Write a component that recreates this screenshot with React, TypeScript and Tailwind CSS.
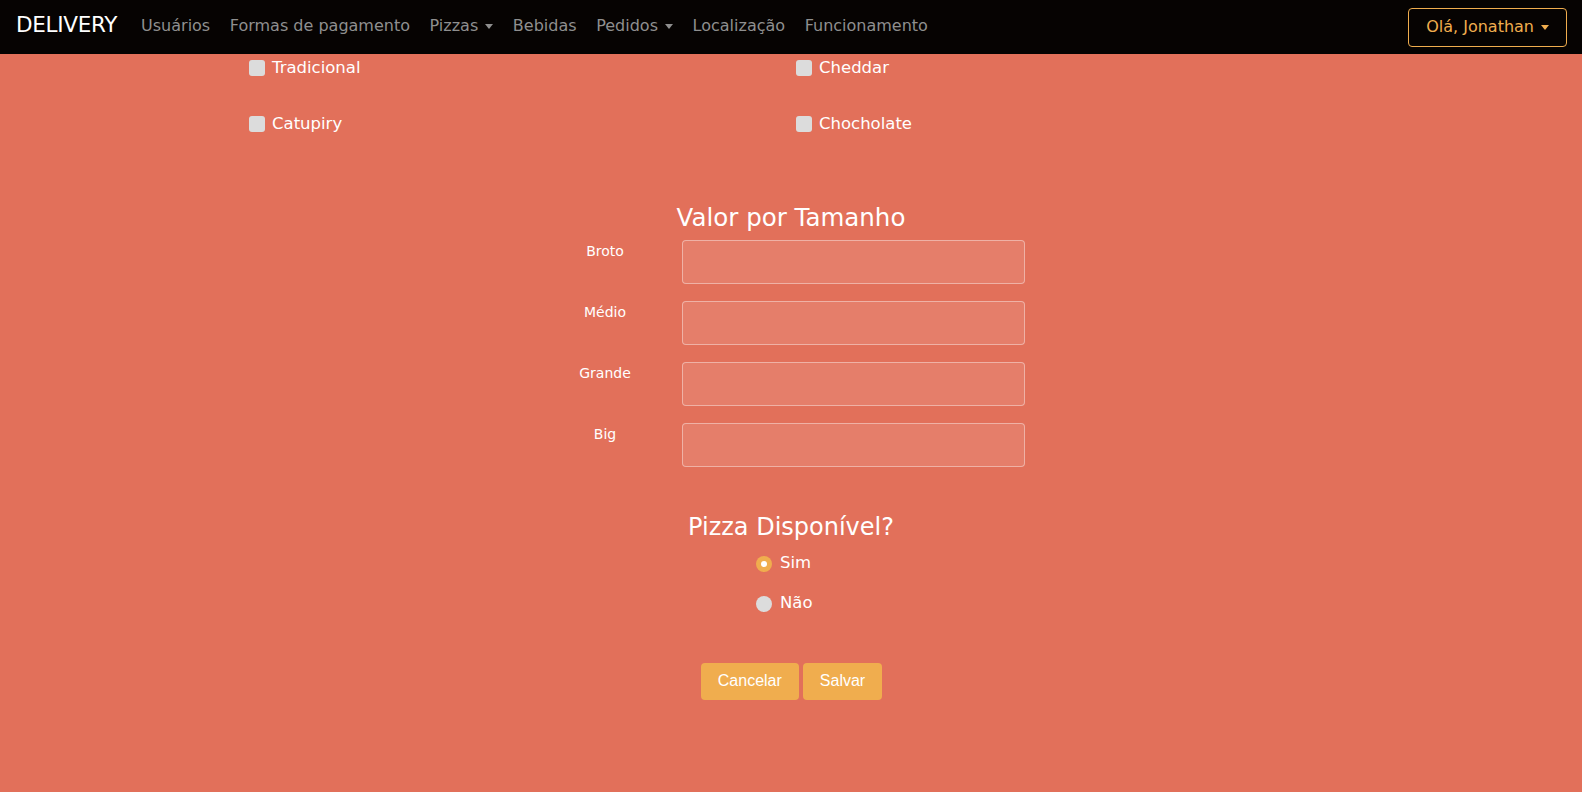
import { useState } from "react";

const font = { fontFamily: '"DejaVu Sans", "Open Sans", sans-serif' };

function Caret() {
  return (
    <span className="ml-[7px] inline-block w-0 h-0 border-l-[4px] border-r-[4px] border-t-[5px] border-l-transparent border-r-transparent border-t-current align-middle"></span>
  );
}

export default function App() {
  const [available, setAvailable] = useState("sim");
  const links = [
    { name: "Usuários" },
    { name: "Formas de pagamento" },
    { name: "Pizzas", drop: true },
    { name: "Bebidas" },
    { name: "Pedidos", drop: true },
    { name: "Localização" },
    { name: "Funcionamento" },
  ];
  return (
    <div className="min-h-[792px] bg-[#e2705a] text-white" style={font}>
      <nav className="h-[54px] bg-[#060302] flex items-center pl-4 pr-[15px] pb-[3px]">
        <a className="text-[21.5px] text-white mr-[24px] tracking-[-0.3px]">DELIVERY</a>
        <ul className="flex items-center gap-[19.6px]">
          {links.map((l) => (
            <li
              key={l.name}
              className="text-[16px] text-[#8f8f8f] cursor-pointer whitespace-nowrap"
            >
              {l.name}
              {l.drop && <Caret />}
            </li>
          ))}
        </ul>
        <button className="ml-auto mt-[3px] h-[39px] px-[17px] border border-[#f0ad4e] rounded-[4px] text-[#f0ad4e] text-[16px]">
          Olá, Jonathan
          <Caret />
        </button>
      </nav>

      <div className="w-[1110px] mx-auto">
        <div className="grid grid-cols-[547px_1fr] pl-[13px] mt-[4px] gap-y-[36px] text-[16.5px]">
          {["Tradicional", "Cheddar", "Catupiry", "Chocholate"].map((c) => (
            <label key={c} className="flex items-center h-[20px] cursor-pointer">
              <span className="w-[16px] h-[16px] rounded-[3px] bg-[#dcdcdc] mr-[7px]"></span>
              {c}
            </label>
          ))}
        </div>

        <h3 className="text-center text-[24.5px] mt-[66px]">Valor por Tamanho</h3>
        <div className="flex flex-col gap-[17px] mt-[3px] ml-[325px]">
          {["Broto", "Médio", "Grande", "Big"].map((s) => (
            <div key={s} className="flex">
              <label className="w-[88px] text-center text-[14px] pt-[1px]">{s}</label>
              <input
                className="ml-[33px] w-[343px] h-[44px] rounded-[4px] bg-white/10 border border-white/40 outline-none"
                type="text"
              />
            </div>
          ))}
        </div>

        <h3 className="text-center text-[24px] mt-[42px]">Pizza Disponível?</h3>
        <div className="flex flex-col items-start ml-[520px] gap-[20px] mt-[9px] text-[16.5px]">
          {[
            ["sim", "Sim"],
            ["nao", "Não"],
          ].map(([v, t]) => (
            <label
              key={v}
              className="flex items-center h-[20px] cursor-pointer"
              onClick={() => setAvailable(v)}
            >
              <span
                className={`w-[16px] h-[16px] rounded-full mr-[8px] flex items-center justify-center ${
                  available === v ? "bg-[#f0ad4e]" : "bg-[#dcdcdc]"
                }`}
              >
                {available === v && (
                  <span className="w-[6px] h-[6px] rounded-full bg-white"></span>
                )}
              </span>
              {t}
            </label>
          ))}
        </div>

        <div
          className="flex justify-center gap-[4px] mt-[49px] ml-[1px]"
          style={{ fontFamily: '"Liberation Sans", Arial, sans-serif' }}
        >
          <button className="h-[37px] px-[17px] bg-[#f0ad4e] rounded-[4px] text-[16px] text-white">
            Cancelar
          </button>
          <button className="h-[37px] px-[17px] bg-[#f0ad4e] rounded-[4px] text-[16px] text-white">
            Salvar
          </button>
        </div>
      </div>
    </div>
  );
}
